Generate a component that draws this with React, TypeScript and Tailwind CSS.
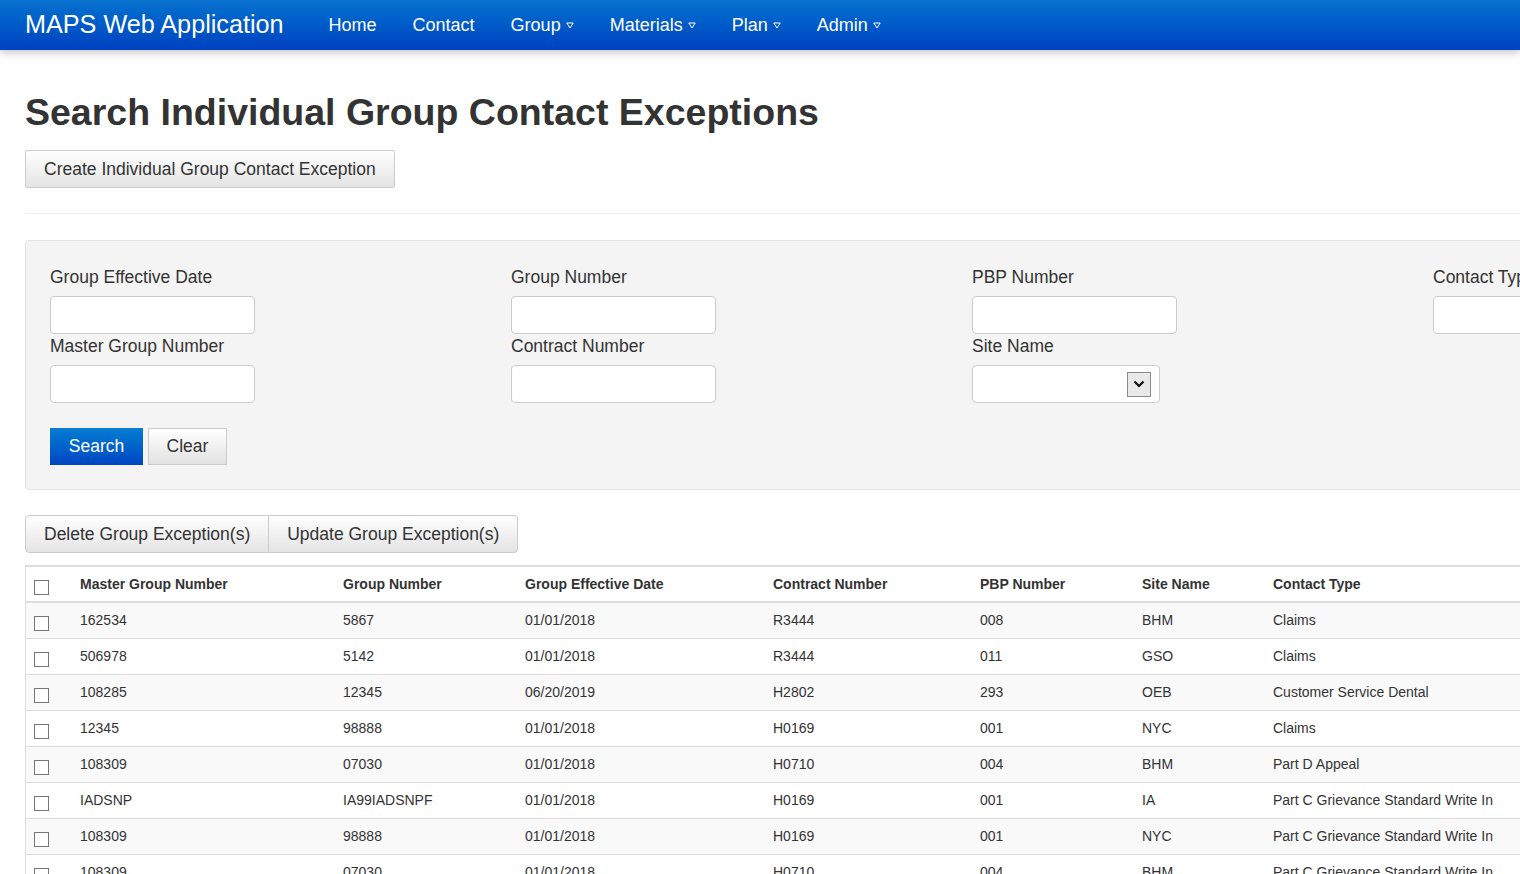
import React from "react";

const navLinks = [
  { label: "Home", menu: false },
  { label: "Contact", menu: false },
  { label: "Group", menu: true },
  { label: "Materials", menu: true },
  { label: "Plan", menu: true },
  { label: "Admin", menu: true },
];

const rows = [
  ["162534", "5867", "01/01/2018", "R3444", "008", "BHM", "Claims"],
  ["506978", "5142", "01/01/2018", "R3444", "011", "GSO", "Claims"],
  ["108285", "12345", "06/20/2019", "H2802", "293", "OEB", "Customer Service Dental"],
  ["12345", "98888", "01/01/2018", "H0169", "001", "NYC", "Claims"],
  ["108309", "07030", "01/01/2018", "H0710", "004", "BHM", "Part D Appeal"],
  ["IADSNP", "IA99IADSNPF", "01/01/2018", "H0169", "001", "IA", "Part C Grievance Standard Write In"],
  ["108309", "98888", "01/01/2018", "H0169", "001", "NYC", "Part C Grievance Standard Write In"],
  ["108309", "07030", "01/01/2018", "H0710", "004", "BHM", "Part C Grievance Standard Write In"],
  ["108309", "98888", "01/01/2018", "H0169", "001", "NYC", "Claims"],
];

const headers = [
  "Master Group Number",
  "Group Number",
  "Group Effective Date",
  "Contract Number",
  "PBP Number",
  "Site Name",
  "Contact Type",
];

// column widths match the original table
const gridCols = "grid grid-cols-[47px_263px_182px_248px_207px_162px_131px_1fr]";

function Caret() {
  return (
    <svg width="8" height="7" viewBox="0 0 8 7" className="ml-[5px] mt-[1px]">
      <path d="M0.8 1 L7.2 1 L4 6 Z" fill="none" stroke="white" strokeWidth="1" />
    </svg>
  );
}

function Checkbox() {
  return <span className="mt-[6px] block w-[15px] h-[15px] border border-[#777] bg-white" />;
}

function Field({ label, select }: { label: string; select?: boolean }) {
  return (
    <div>
      <label className="block h-[20px] leading-[20px] mb-[9px]">{label}</label>
      {select ? (
        <div className="w-[188px] h-[38px] bg-white border border-[#ccc] rounded-[4px] flex items-center justify-end pr-[8px]">
          <span className="w-[24px] h-[25px] bg-[#e9e9e9] border border-[#8a8a8a] flex items-center justify-center">
            <svg width="12" height="8" viewBox="0 0 12 8">
              <path d="M1.5 1.5 L6 6 L10.5 1.5" fill="none" stroke="#111" strokeWidth="2.2" />
            </svg>
          </span>
        </div>
      ) : (
        <input className="w-[205px] h-[38px] bg-white border border-[#ccc] rounded-[4px] px-3 outline-none" />
      )}
    </div>
  );
}

export default function App() {
  return (
    <div className="w-[1520px] h-[874px] overflow-hidden bg-white text-[#333] font-['Liberation_Sans',Arial,sans-serif]">
      <nav className="relative z-10 h-[50px] w-[1520px] bg-gradient-to-b from-[#0a72cf] to-[#0040c1] shadow-[0_3px_8px_rgba(0,0,0,0.22)] flex items-center pl-[25px] text-white">
        <span className="text-[25.2px] leading-none">MAPS Web Application</span>
        <div className="flex items-center ml-[45px] gap-[36px]">
          {navLinks.map((l) => (
            <span key={l.label} className="flex items-center text-[18px]">
              {l.label}
              {l.menu && <Caret />}
            </span>
          ))}
        </div>
      </nav>

      <div className="w-[1896px] pl-[25px]">
        <h1 className="mt-[42px] text-[37.5px] leading-[41px] font-bold">
          Search Individual Group Contact Exceptions
        </h1>
        <button className="mt-[17px] h-[38px] px-[18px] text-[17.5px] border border-[#ccc] rounded-[2px] bg-gradient-to-b from-white to-[#e4e4e4]">
          Create Individual Group Contact Exception
        </button>
        <hr className="mt-[25px] border-t border-[#eee]" />

        <div className="mt-[26px] bg-[#f4f4f4] border border-[#e3e3e3] rounded-[4px] pt-[26px] pb-[24px] pl-[24px] text-[17.5px]">
          <div className="grid grid-cols-[461px_461px_461px_461px]">
            <div>
              <Field label="Group Effective Date" />
              <div className="mt-[2px]">
                <Field label="Master Group Number" />
              </div>
            </div>
            <div>
              <Field label="Group Number" />
              <div className="mt-[2px]">
                <Field label="Contract Number" />
              </div>
            </div>
            <div>
              <Field label="PBP Number" />
              <div className="mt-[2px]">
                <Field label="Site Name" select />
              </div>
            </div>
            <div>
              <Field label="Contact Type" />
            </div>
          </div>
          <div className="mt-[25px] flex gap-[5px]">
            <button className="w-[93px] h-[37px] text-white bg-gradient-to-b from-[#0a7dd2] to-[#0045c2]">
              Search
            </button>
            <button className="w-[79px] h-[37px] border border-[#ccc] bg-gradient-to-b from-white to-[#e2e2e2]">
              Clear
            </button>
          </div>
        </div>

        <div className="mt-[25px] flex text-[17.5px]">
          <button className="h-[38px] px-[18px] border border-[#ccc] rounded-l-[4px] bg-gradient-to-b from-white to-[#e4e4e4]">
            Delete Group Exception(s)
          </button>
          <button className="h-[38px] px-[18px] border border-l-0 border-[#ccc] rounded-r-[4px] bg-gradient-to-b from-white to-[#e4e4e4]">
            Update Group Exception(s)
          </button>
        </div>

        <div className="mt-[12px] border-l border-t-2 border-[#ddd] text-[14px]">
          <div className={`${gridCols} h-[36px] border-b-2 border-[#ddd] font-bold`}>
            <div className="pl-[8px] flex items-center">
              <Checkbox />
            </div>
            {headers.map((h) => (
              <div key={h} className="pl-[7px] flex items-center">
                {h}
              </div>
            ))}
          </div>
          {rows.map((r, i) => (
            <div
              key={i}
              className={`${gridCols} h-[36px] border-b border-[#ddd] ${i % 2 === 0 ? "bg-[#f9f9f9]" : "bg-white"}`}
            >
              <div className="pl-[8px] flex items-center">
                <Checkbox />
              </div>
              {r.map((c, j) => (
                <div key={j} className="pl-[7px] flex items-center">
                  {c}
                </div>
              ))}
            </div>
          ))}
        </div>
      </div>
    </div>
  );
}
